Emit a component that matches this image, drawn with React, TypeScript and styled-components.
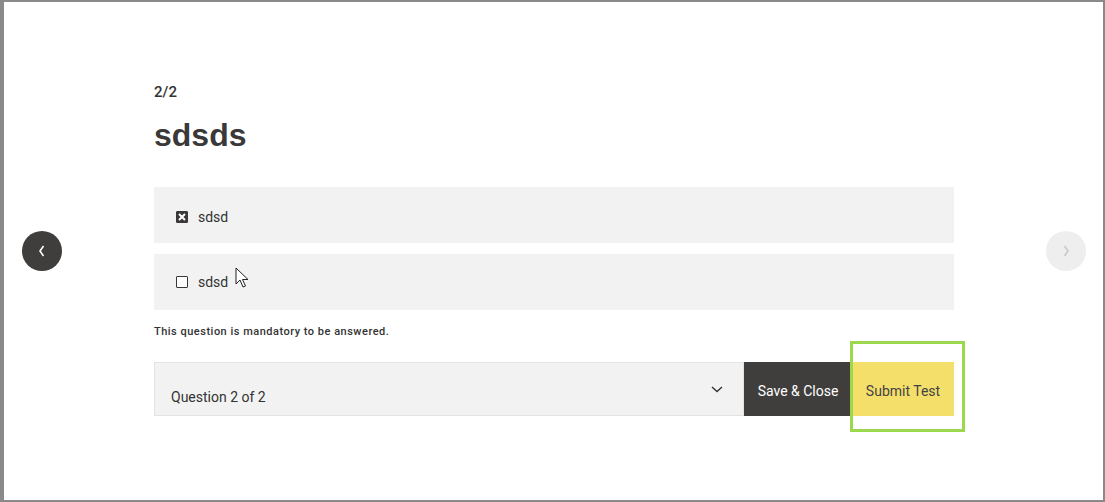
import React from 'react';
import styled, { createGlobalStyle } from 'styled-components';

const GlobalStyle = createGlobalStyle`
  html, body {
    margin: 0;
    padding: 0;
    background: #ffffff;
  }
  body {
    font-family: Roboto, 'Liberation Sans', sans-serif;
    color: #333;
  }
`;

const Frame = styled.div`
  box-sizing: border-box;
  width: 1105px;
  height: 502px;
  border-style: solid;
  border-color: #8a8a8a;
  border-width: 2px 2px 2px 4px;
  display: grid;
  grid-template-columns: 150px 800px 1fr;
`;

const NavButton = styled.button<{ active?: boolean }>`
  align-self: center;
  width: 40px;
  height: 40px;
  border-radius: 50%;
  border: none;
  padding: 0;
  display: flex;
  align-items: center;
  justify-content: center;
  background: ${(p) => (p.active ? '#403e3d' : '#eeeeee')};
  color: ${(p) => (p.active ? '#ffffff' : '#c9c9c9')};
  cursor: pointer;
`;

const LeftNav = styled(NavButton)`
  margin-left: 18px;
`;

const RightNav = styled(NavButton)`
  justify-self: end;
  margin-right: 17px;
`;

const Main = styled.div`
  padding-top: 80px;
  display: flex;
  flex-direction: column;
`;

const Counter = styled.div`
  font-size: 15px;
  line-height: 20px;
  font-weight: 500;
  color: #333;
`;

const Title = styled.h1`
  margin: 13px 0 32px;
  font-family: 'Liberation Sans', Arial, sans-serif;
  font-size: 32px;
  line-height: 40px;
  font-weight: 700;
  color: #3a3838;
`;

const Options = styled.div`
  display: flex;
  flex-direction: column;
  gap: 11px;
`;

const Option = styled.label<{ shift?: number }>`
  position: relative;
  height: 56px;
  box-sizing: border-box;
  background: #f2f2f2;
  display: flex;
  align-items: center;
  gap: 10px;
  padding-left: 22px;
  padding-top: ${(p) => p.shift ?? 0}px;
  font-size: 14px;
  color: #333;
`;

const Box = styled.span<{ checked?: boolean }>`
  box-sizing: border-box;
  width: 12px;
  height: 12px;
  border-radius: 1px;
  border: 1.5px solid #3a3838;
  background: ${(p) => (p.checked ? '#3a3838' : '#ffffff')};
  display: flex;
  align-items: center;
  justify-content: center;
`;

const Cursor = styled.svg`
  position: absolute;
  left: 81px;
  top: 13px;
`;

const Note = styled.p`
  margin: 14px 0 0;
  font-size: 11px;
  line-height: 16px;
  font-weight: 500;
  letter-spacing: 0.5px;
  color: #333;
`;

const Bar = styled.div`
  position: relative;
  margin-top: 22px;
  height: 54px;
  display: flex;
`;

const Select = styled.div`
  box-sizing: border-box;
  flex: 1;
  background: #f2f2f2;
  border: 1px solid #e3e3e3;
  display: flex;
  align-items: center;
  justify-content: space-between;
  padding: 16px 20px 0 16px;
  font-size: 14px;
  font-weight: 400;
  color: #333;
`;

const Chevron = styled.svg`
  margin-top: -16px;
`;

const Action = styled.button<{ primary?: boolean }>`
  border: none;
  height: 54px;
  padding: 3px 0 0;
  font-family: Roboto, 'Liberation Sans', sans-serif;
  font-size: 14px;
  font-weight: 400;
  width: ${(p) => (p.primary ? '102px' : '108px')};
  background: ${(p) => (p.primary ? '#f4df6b' : '#403e3d')};
  color: ${(p) => (p.primary ? '#444' : '#ffffff')};
`;

const Focus = styled.span`
  position: absolute;
  left: 696px;
  top: -21px;
  width: 115px;
  height: 91px;
  box-sizing: border-box;
  border: 3px solid #9bd84e;
  pointer-events: none;
`;

const Arrow = ({ dir }: { dir: 'left' | 'right' }) => (
  <svg width="10" height="14" viewBox="0 0 10 14" fill="none">
    <path
      d={dir === 'left' ? 'M6.5 2 L3 7 L6.5 12' : 'M3.5 2 L7 7 L3.5 12'}
      stroke="currentColor"
      strokeWidth="1.6"
    />
  </svg>
);

export default function App() {
  return (
    <>
      <GlobalStyle />
      <Frame>
        <LeftNav active aria-label="Previous">
          <Arrow dir="left" />
        </LeftNav>
        <Main>
          <Counter>2/2</Counter>
          <Title>sdsds</Title>
          <Options>
            <Option shift={3}>
              <Box checked>
                <svg width="8" height="8" viewBox="0 0 8 8">
                  <path d="M1 1 L7 7 M7 1 L1 7" stroke="#fff" strokeWidth="2" />
                </svg>
              </Box>
              sdsd
            </Option>
            <Option>
              <Box />
              sdsd
              <Cursor width="14" height="22" viewBox="0 0 14 22">
                <path
                  d="M1 1 L1 17 L5 13 L8 20 L10.5 19 L7.5 12.5 L13 12.5 Z"
                  fill="#fff"
                  stroke="#222"
                  strokeWidth="1"
                  strokeLinejoin="round"
                />
              </Cursor>
            </Option>
          </Options>
          <Note>This question is mandatory to be answered.</Note>
          <Bar>
            <Select>
              <span>Question 2 of 2</span>
              <Chevron width="12" height="7" viewBox="0 0 12 7" fill="none">
                <path d="M1 1 L6 5.5 L11 1" stroke="#333" strokeWidth="1.4" />
              </Chevron>
            </Select>
            <Action>Save &amp; Close</Action>
            <Action primary>Submit Test</Action>
            <Focus />
          </Bar>
        </Main>
        <RightNav aria-label="Next">
          <Arrow dir="right" />
        </RightNav>
      </Frame>
    </>
  );
}
